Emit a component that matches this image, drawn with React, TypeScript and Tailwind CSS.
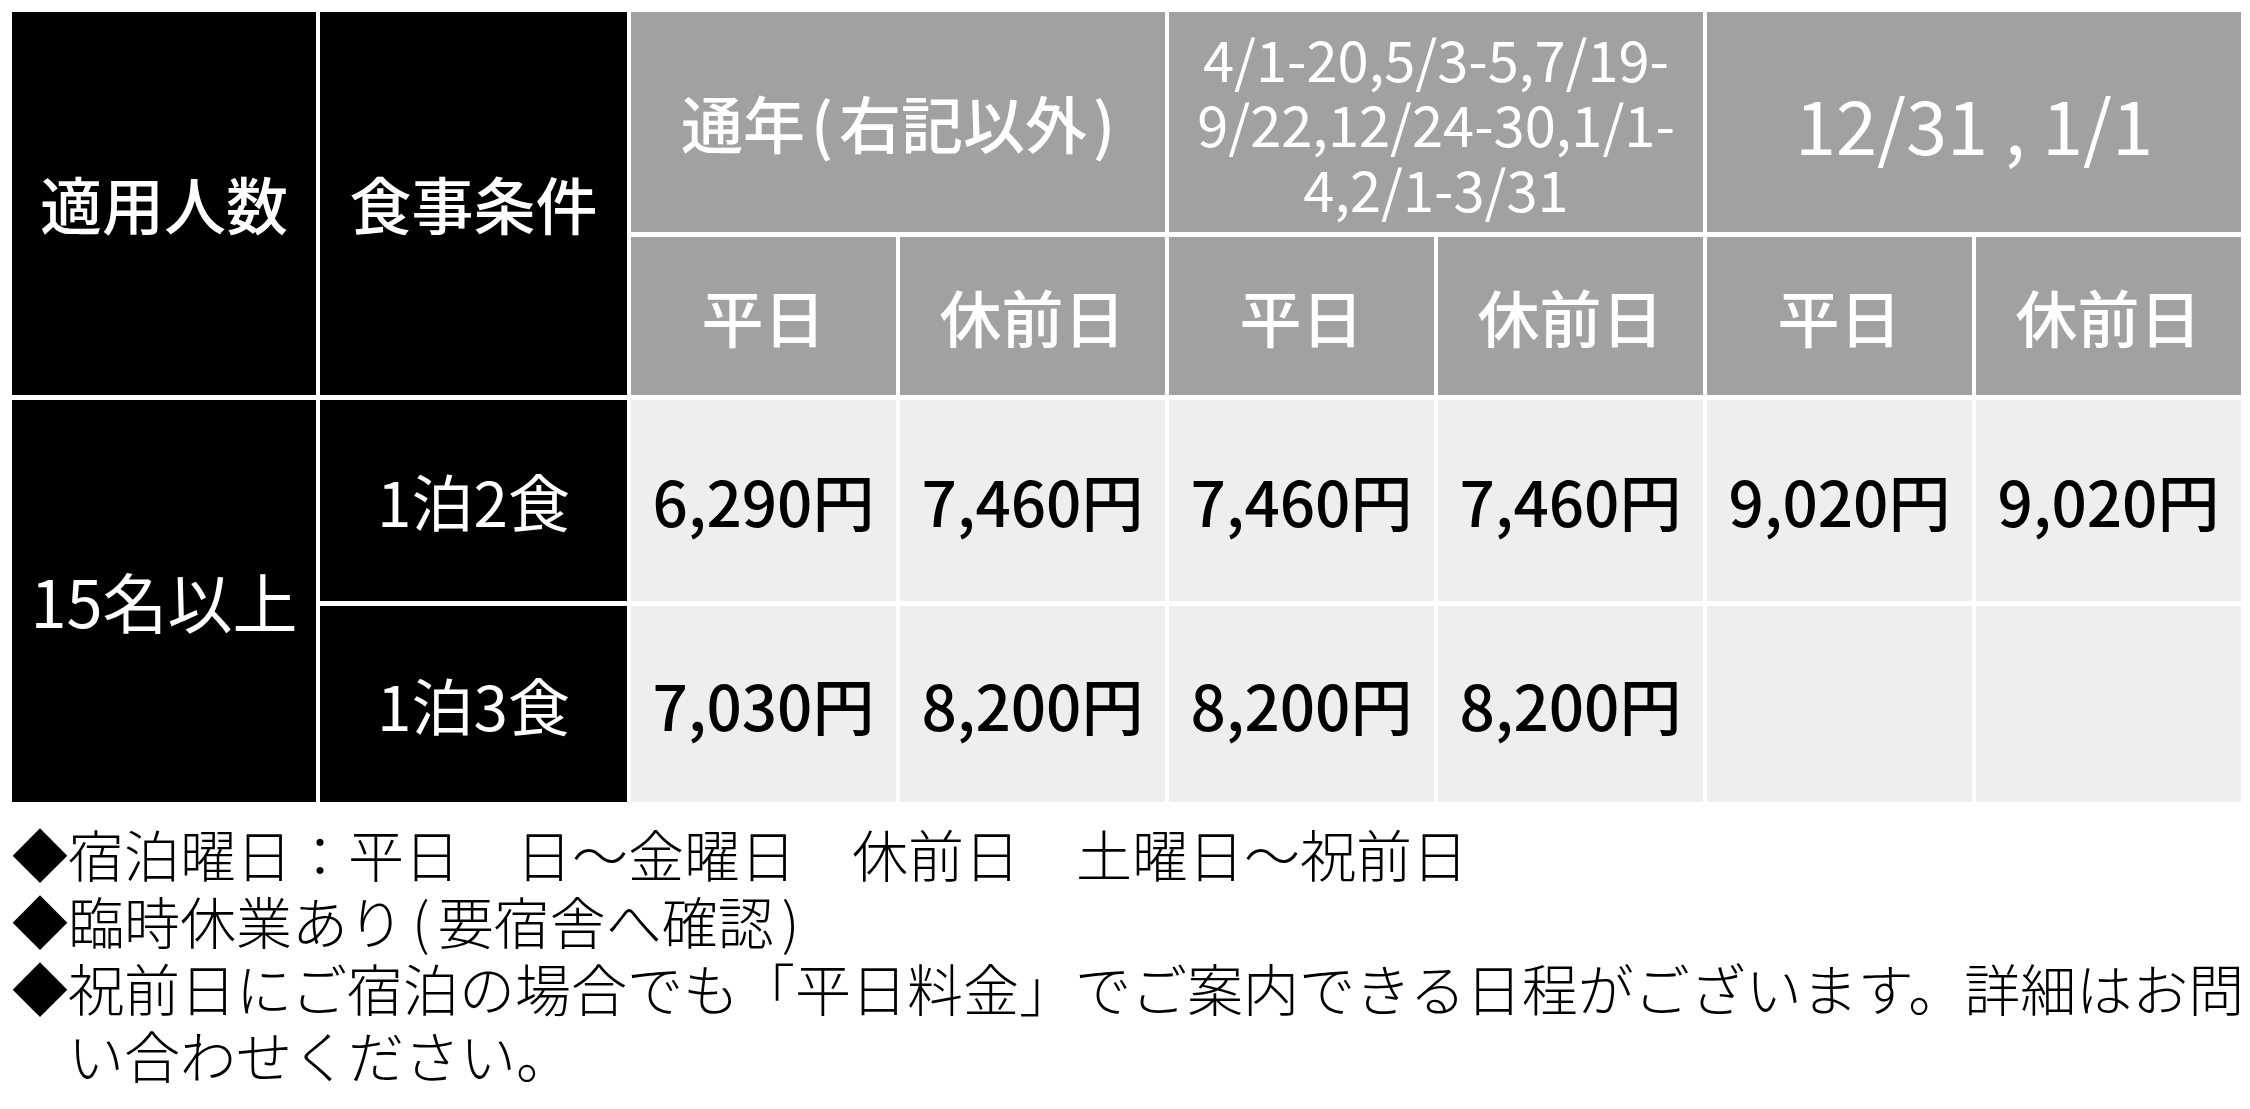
const font = { fontFamily: '"Noto Sans CJK JP", "Noto Sans", sans-serif' };

const sub = ['平日', '休前日', '平日', '休前日', '平日', '休前日'];

const rows = [
  { label: '1泊2食', prices: ['6,290円', '7,460円', '7,460円', '7,460円', '9,020円', '9,020円'] },
  { label: '1泊3食', prices: ['7,030円', '8,200円', '8,200円', '8,200円', '', ''] },
];

function Cell({ className, children }: { className: string; children?: React.ReactNode }) {
  return <div className={`flex items-center justify-center text-center ${className}`}>{children}</div>;
}

export default function App() {
  return (
    <div className="w-[2250px] h-[1109px] bg-white px-[12px] pt-[12px] overflow-hidden" style={font}>
      <div className="grid grid-cols-[304px_307px_265px_265px_265px_265px_265px_265px] grid-rows-[220px_158px_201px_196px] gap-x-[4px] gap-y-[5px]">
        {/* header */}
        <Cell className="row-span-2 bg-black text-white text-[62px] font-medium">適用人数</Cell>
        <Cell className="row-span-2 bg-black text-white text-[62px] font-medium">食事条件</Cell>
        <Cell className="col-span-2 bg-[#a0a1a3] text-white text-[62px] font-medium">
          <span>通年</span>
          <span className="mx-[6px]">(</span>
          <span>右記以外</span>
          <span className="ml-[6px]">)</span>
        </Cell>
        <Cell className="col-span-2 bg-[#a0a1a3] text-white text-[56px] leading-[65px] px-4">
          4/1-20,5/3-5,7/19-
          <br />
          9/22,12/24-30,1/1-
          <br />
          4,2/1-3/31
        </Cell>
        <Cell className="col-span-2 bg-[#a0a1a3] text-white text-[74px]">12/31 , 1/1</Cell>
        {sub.map((s, i) => (
          <Cell key={i} className="bg-[#a0a1a3] text-white text-[62px] font-medium">
            {s}
          </Cell>
        ))}

        {/* body */}
        <Cell className="row-span-2 col-start-1 row-start-3 bg-black text-white text-[65px]">15名以上</Cell>
        {rows.map((r) => (
          <>
            <Cell key={r.label} className="bg-black text-white text-[62px]">
              {r.label}
            </Cell>
            {r.prices.map((p, i) => (
              <Cell key={r.label + i} className="bg-[#eeeeee] text-black text-[62px] font-medium">
                {p}
              </Cell>
            ))}
          </>
        ))}
      </div>

      <div className="mt-[17px] text-[56px] leading-[67px] font-light text-black whitespace-nowrap">
        <p>◆宿泊曜日：平日　日～金曜日　休前日　土曜日～祝前日</p>
        <p>
          ◆臨時休業あり<span className="mx-[8px]">(</span>要宿舎へ確認<span className="mx-[8px]">)</span>
        </p>
        <p>◆祝前日にご宿泊の場合でも「平日料金」でご案内できる日程がございます。詳細はお問</p>
        <p className="pl-[1em]">い合わせください。</p>
      </div>
    </div>
  );
}
